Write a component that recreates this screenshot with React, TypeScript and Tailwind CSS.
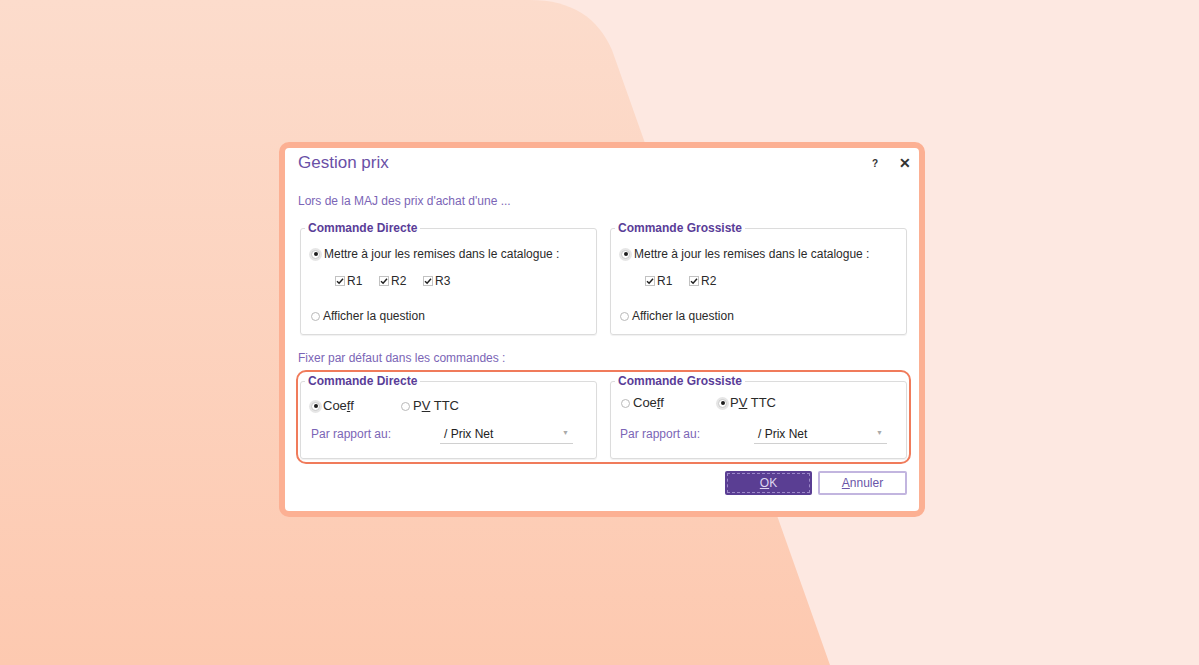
import React from "react";

const font = { fontFamily: '"Liberation Sans", Arial, sans-serif' };

const Radio = ({ checked }: { checked?: boolean }) => (
  <span
    className={
      "flex items-center justify-center w-[9px] h-[9px] rounded-full border bg-white shrink-0 " +
      (checked ? "border-[#c9c9c9] ring-2 ring-[#e6e6e6]" : "border-[#b9b9b9]")
    }
  >
    {checked && <span className="w-[4px] h-[4px] rounded-full bg-[#1e1e1e]" />}
  </span>
);

const Check = () => (
  <span className="flex items-center justify-center w-[10px] h-[10px] border border-[#c2c2c2] bg-white shrink-0">
    <svg width="8" height="8" viewBox="0 0 8 8">
      <path d="M1 4.2 L3.1 6.2 L7 1.8" stroke="#222" strokeWidth="1.5" fill="none" />
    </svg>
  </span>
);

const Box = ({
  title,
  children,
}: {
  title: string;
  children: React.ReactNode;
}) => (
  <fieldset className="w-[297px] border border-[#dcdcdc] rounded-[3px] shadow-[0_1px_1px_rgba(0,0,0,0.06)]">
    <legend className="ml-[4px] px-[3px] text-[12px] leading-[14px] font-bold text-[#5a3d98]">
      {title}
    </legend>
    {children}
  </fieldset>
);

const Dropdown = ({ w }: { w: string }) => (
  <div className={"flex items-center justify-between h-[20px] border-b border-[#d0d0d0] pl-[4px] pr-[4px] " + w}>
    <span className="text-[12px] text-[#222]">/ Prix Net</span>
    <span className="text-[7px] text-[#aaa]">▼</span>
  </div>
);

export default function App() {
  return (
    <div
      className="relative w-[1199px] h-[665px] overflow-hidden bg-[#fde8e1]"
      style={font}
    >
      <svg className="absolute inset-0" width="1199" height="665">
        <defs>
          <linearGradient id="bg" x1="0" y1="0" x2="0" y2="1">
            <stop offset="0" stopColor="#fcdccc" />
            <stop offset="1" stopColor="#fdc9b0" />
          </linearGradient>
        </defs>
        <path d="M0 0 H530 C 572 0 598 18 612 50 L 830 665 H0 Z" fill="url(#bg)" />
      </svg>

      <div className="relative pt-[142px] pl-[279px]">
        <div className="w-[646px] h-[375px] border-[6px] border-[#fcb093] rounded-[10px] bg-white flex flex-col">
          <div className="h-[30px] flex items-center pl-[13px] pr-[8px]">
            <span className="text-[17px] text-[#6a50a6] flex-1">Gestion prix</span>
            <span className="text-[10px] font-bold text-[#333] mr-[21px]">?</span>
            <span className="text-[14px] font-bold text-[#333]">✕</span>
          </div>

          <div className="mt-[15px] h-[16px] leading-[16px] pl-[13px] text-[12px] text-[#7b65b6]">
            Lors de la MAJ des prix d'achat d'une ...
          </div>

          <div className="mt-[12px] flex gap-[13px] pl-[15px]">
            <Box title="Commande Directe">
              <div className="flex flex-col pt-[11px] pb-[10px] text-[12px] text-[#2a2a2a]">
                <div className="h-[16px] flex items-center gap-[4px] pl-[10px]">
                  <Radio checked />
                  <span>Mettre à jour les remises dans le catalogue :</span>
                </div>
                <div className="mt-[11px] h-[16px] flex items-center pl-[34px]">
                  {["R1", "R2", "R3"].map((r) => (
                    <div key={r} className="w-[44px] flex items-center gap-[2px]">
                      <Check />
                      <span>{r}</span>
                    </div>
                  ))}
                </div>
                <div className="mt-[19px] h-[16px] flex items-center gap-[3px] pl-[10px]">
                  <Radio />
                  <span>Afficher la question</span>
                </div>
              </div>
            </Box>
            <Box title="Commande Grossiste">
              <div className="flex flex-col pt-[11px] pb-[10px] text-[12px] text-[#2a2a2a]">
                <div className="h-[16px] flex items-center gap-[4px] pl-[10px]">
                  <Radio checked />
                  <span>Mettre à jour les remises dans le catalogue :</span>
                </div>
                <div className="mt-[11px] h-[16px] flex items-center pl-[34px]">
                  {["R1", "R2"].map((r) => (
                    <div key={r} className="w-[44px] flex items-center gap-[2px]">
                      <Check />
                      <span>{r}</span>
                    </div>
                  ))}
                </div>
                <div className="mt-[19px] h-[16px] flex items-center gap-[3px] pl-[9px]">
                  <Radio />
                  <span>Afficher la question</span>
                </div>
              </div>
            </Box>
          </div>

          <div className="mt-[15px] h-[16px] leading-[16px] pl-[13px] text-[12px] text-[#7b65b6]">
            Fixer par défaut dans les commandes :
          </div>

          <div className="mt-[4px] ml-[11px] w-[615px] h-[94px] border-2 border-[#f07b5b] rounded-[10px] pt-[2px] px-[2px] flex items-start gap-[13px]">
            <Box title="Commande Directe">
              <div className="flex flex-col pt-[10px] pb-[14px] text-[12px] text-[#2a2a2a]">
                <div className="h-[16px] flex items-center pl-[10px]">
                  <div className="w-[90px] flex items-center gap-[3px]">
                    <Radio checked />
                    <span className="text-[13px]">
                      Coe<span className="underline">f</span>f
                    </span>
                  </div>
                  <div className="flex items-center gap-[3px]">
                    <Radio />
                    <span className="text-[13px]">
                      P<span className="underline">V</span> TTC
                    </span>
                  </div>
                </div>
                <div className="mt-[10px] flex items-center pl-[10px]">
                  <span className="w-[129px] text-[#7b65b6]">Par rapport au:</span>
                  <Dropdown w="w-[133px]" />
                </div>
              </div>
            </Box>
            <Box title="Commande Grossiste">
              <div className="flex flex-col pt-[7px] pb-[14px] text-[12px] text-[#2a2a2a]">
                <div className="h-[16px] flex items-center pl-[10px]">
                  <div className="w-[97px] flex items-center gap-[3px]">
                    <Radio />
                    <span className="text-[13px]">
                      Coe<span className="underline">f</span>f
                    </span>
                  </div>
                  <div className="flex items-center gap-[3px]">
                    <Radio checked />
                    <span className="text-[13px]">
                      P<span className="underline">V</span> TTC
                    </span>
                  </div>
                </div>
                <div className="mt-[13px] flex items-center pl-[9px]">
                  <span className="w-[134px] text-[#7b65b6]">Par rapport au:</span>
                  <Dropdown w="w-[133px]" />
                </div>
              </div>
            </Box>
          </div>

          <div className="mt-[7px] flex justify-end gap-[6px] pr-[12px]">
            <button className="w-[87px] h-[24px] bg-[#5a3e93] rounded-[2px] p-[2px]">
              <span className="flex items-center justify-center w-full h-full border border-dashed border-[#9c88c9] text-[12px] text-[#ddd4f0]">
                <span className="underline">O</span>K
              </span>
            </button>
            <button className="w-[89px] h-[24px] bg-white border-2 border-[#c2b5df] rounded-[2px] flex items-center justify-center text-[12px] text-[#6a55a8]">
              <span>
                <span className="underline">A</span>nnuler
              </span>
            </button>
          </div>
        </div>
      </div>
    </div>
  );
}
